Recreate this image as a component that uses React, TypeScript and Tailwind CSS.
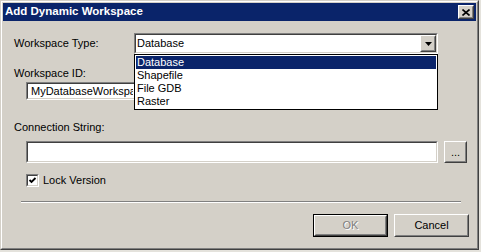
import React from "react";

const font = { fontFamily: '"Liberation Sans", Arial, sans-serif' };

function Sunken({ className, children }: { className?: string; children?: React.ReactNode }) {
  return (
    <div className={`border border-t-[#808080] border-l-[#808080] border-r-white border-b-white ${className ?? ""}`}>
      <div className="h-full w-full border border-t-[#404040] border-l-[#404040] border-r-[#d4d0c8] border-b-[#d4d0c8] bg-white">
        {children}
      </div>
    </div>
  );
}

function Raised({ className, children }: { className?: string; children?: React.ReactNode }) {
  return (
    <div className={`border border-t-white border-l-white border-r-[#404040] border-b-[#404040] ${className ?? ""}`}>
      <div className="flex h-full w-full items-center justify-center border border-t-[#d4d0c8] border-l-[#d4d0c8] border-r-[#808080] border-b-[#808080] bg-[#d4d0c8]">
        {children}
      </div>
    </div>
  );
}

const items = ["Database", "Shapefile", "File GDB", "Raster"];

export default function App() {
  return (
    <div className="h-[252px] w-[481px] bg-[#e4e2dc] text-[11px] text-black" style={font}>
      {/* window frame */}
      <div className="h-[250px] w-[479px] border border-t-[#d4d0c8] border-l-[#d4d0c8] border-r-[#404040] border-b-[#404040]">
        <div className="h-full w-full border border-t-white border-l-white border-r-[#808080] border-b-[#808080] bg-[#d4d0c8] p-px">
          {/* title bar */}
          <div className="flex h-[18px] items-center justify-between bg-[#0a246a] pl-[2px] pr-[2px]">
            <span className="text-[11.5px] font-bold leading-none text-white">Add Dynamic Workspace</span>
            <Raised className="h-[14px] w-[16px]">
              <svg width="8" height="7" viewBox="0 0 8 7">
                <path d="M0.5 0.5 L7.5 6.5 M7.5 0.5 L0.5 6.5" stroke="black" strokeWidth="1.6" />
              </svg>
            </Raised>
          </div>

          {/* body */}
          <div className="relative flex flex-col">
            <div className="mt-[12px] flex items-center">
              <span className="ml-[11px] w-[120px] leading-[13px]">Workspace Type:</span>
              <Sunken className="h-[21px] w-[304px]">
                <div className="flex h-full items-center justify-between pl-px">
                  <span className="leading-[13px]">Database</span>
                  <Raised className="h-[17px] w-[16px]">
                    <svg width="7" height="4" viewBox="0 0 7 4">
                      <path d="M0 0 H7 L3.5 4 Z" fill="black" />
                    </svg>
                  </Raised>
                </div>
              </Sunken>
            </div>

            <span className="ml-[11px] mt-[13px] leading-[13px]">Workspace ID:</span>
            <Sunken className="ml-[23px] mt-[2px] h-[18px] w-[412px]">
              <div className="flex h-full items-center pl-[3px] leading-[13px]">
                {/* the open list covers the rest of this text */}
                <span className="w-[102px] overflow-hidden whitespace-nowrap">MyDatabaseWorkspace</span>
              </div>
            </Sunken>

            <span className="ml-[11px] mt-[21px] leading-[13px]">Connection String:</span>
            <div className="ml-[23px] mt-[7px] flex gap-[6px]">
              <Sunken className="h-[22px] w-[412px]" />
              <Raised className="h-[22px] w-[23px]">
                <span className="leading-none">...</span>
              </Raised>
            </div>

            <div className="ml-[23px] mt-[11px] flex items-center gap-[4px]">
              <Sunken className="h-[13px] w-[13px]">
                <svg width="9" height="9" viewBox="0 0 9 9" className="block">
                  <path d="M1.5 4 L3.5 6 L7.5 2" stroke="black" strokeWidth="1.8" fill="none" />
                </svg>
              </Sunken>
              <span className="leading-[13px]">Lock Version</span>
            </div>

            <div className="ml-[18px] mt-[14px] w-[440px] border-t border-b border-t-[#808080] border-b-white" />

            <div className="mt-[11px] flex justify-end gap-[6px] pr-[7px]">
              <div className="h-[23px] w-[75px] border border-black">
                <Raised className="h-full w-full">
                  <span className="text-[#808080] [text-shadow:1px_1px_0_#fff]">OK</span>
                </Raised>
              </div>
              <Raised className="h-[23px] w-[75px]">
                <span>Cancel</span>
              </Raised>
            </div>

            {/* open dropdown list */}
            <div className="absolute left-[131px] top-[33px] w-[304px] border border-black bg-white p-px">
              {items.map((it, i) => (
                <div
                  key={it}
                  className={`h-[13px] pl-px leading-[13px] ${i === 0 ? "bg-[#0a246a] text-white" : ""}`}
                >
                  {it}
                </div>
              ))}
            </div>
          </div>
        </div>
      </div>
    </div>
  );
}
